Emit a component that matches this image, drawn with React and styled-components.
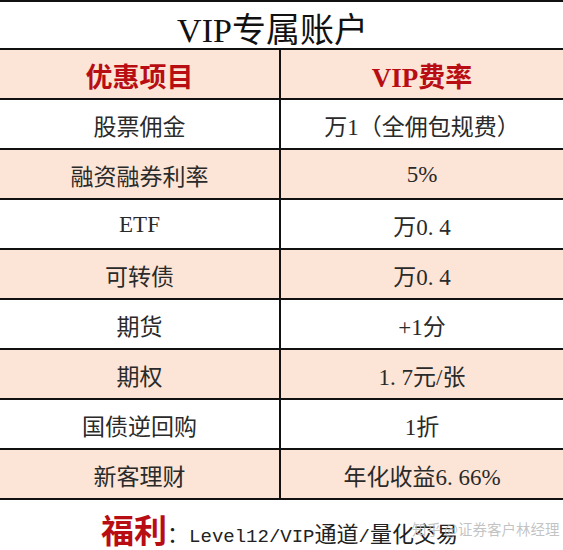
import React from "react";
import styled, { createGlobalStyle } from "styled-components";

const GlobalStyle = createGlobalStyle`
  body {
    margin: 0;
    background: #ffffff;
    font-family: "Liberation Serif", "Noto Sans CJK SC", serif;
  }
`;

const rows = [
  { item: "股票佣金", rate: "万1（全佣包规费）", shaded: false },
  { item: "融资融券利率", rate: "5%", shaded: true },
  { item: "ETF", rate: "万0. 4", shaded: false },
  { item: "可转债", rate: "万0. 4", shaded: true },
  { item: "期货", rate: "+1分", shaded: false },
  { item: "期权", rate: "1. 7元/张", shaded: true },
  { item: "国债逆回购", rate: "1折", shaded: false },
  { item: "新客理财", rate: "年化收益6. 66%", shaded: true },
];

const Page = styled.div`
  width: 563px;
  height: 550px;
  position: relative;
  overflow: hidden;
  background: #fff;
`;

const Title = styled.div`
  height: 50px;
  box-sizing: border-box;
  border-top: 2px solid #111;
  border-bottom: 2px solid #111;
  display: flex;
  align-items: center;
  justify-content: center;
  padding: 4px 18px 0 0;
  font-size: 34px;
  color: #111;
`;

const Table = styled.div`
  display: grid;
  grid-template-columns: 281px 1fr;
`;

const Cell = styled.div`
  height: 50px;
  box-sizing: border-box;
  border-bottom: 2px solid #111;
  border-right: ${(p) => (p.$left ? "2px solid #111" : "none")};
  background: ${(p) => (p.$shaded ? "#fce5d7" : "#ffffff")};
  display: flex;
  align-items: center;
  justify-content: center;
  padding-top: 2px;
  font-size: ${(p) => (p.$head ? "27px" : "23px")};
  font-weight: ${(p) => (p.$head ? 700 : 400)};
  color: ${(p) => (p.$head ? "#b80d12" : "#2a2a2a")};
  white-space: nowrap;
`;

const Footer = styled.div`
  height: 50px;
  box-sizing: border-box;
  display: flex;
  align-items: center;
  justify-content: center;
  padding: 7px 0 0 0;
  margin-left: -4px;
`;

const Welfare = styled.span`
  font-size: 33px;
  font-weight: 700;
  color: #b80d12;
`;

const FooterText = styled.span`
  font-size: 22px;
  color: #222;
  padding-top: 7px;
  white-space: nowrap;
`;

const Latin = styled.span`
  font-family: "Liberation Mono", monospace;
  font-size: 19px;
`;

const Watermark = styled.div`
  position: absolute;
  left: 412px;
  top: 518px;
  font-family: "Noto Sans CJK SC", sans-serif;
  font-size: 14.5px;
  color: rgba(185, 185, 185, 0.85);
  white-space: nowrap;
`;

export default function App() {
  return (
    <Page>
      <GlobalStyle />
      <Title>VIP专属账户</Title>
      <Table>
        <Cell $left $shaded $head>优惠项目</Cell>
        <Cell $shaded $head>VIP费率</Cell>
        {rows.map((r) => (
          <React.Fragment key={r.item}>
            <Cell $left $shaded={r.shaded}>{r.item}</Cell>
            <Cell $shaded={r.shaded}>{r.rate}</Cell>
          </React.Fragment>
        ))}
      </Table>
      <Footer>
        <Welfare>福利</Welfare>
        <FooterText>
          ：<Latin>Level12/VIP</Latin>通道<Latin>/</Latin>量化交易
        </FooterText>
      </Footer>
      <Watermark>知乎 @证券客户林经理</Watermark>
    </Page>
  );
}
